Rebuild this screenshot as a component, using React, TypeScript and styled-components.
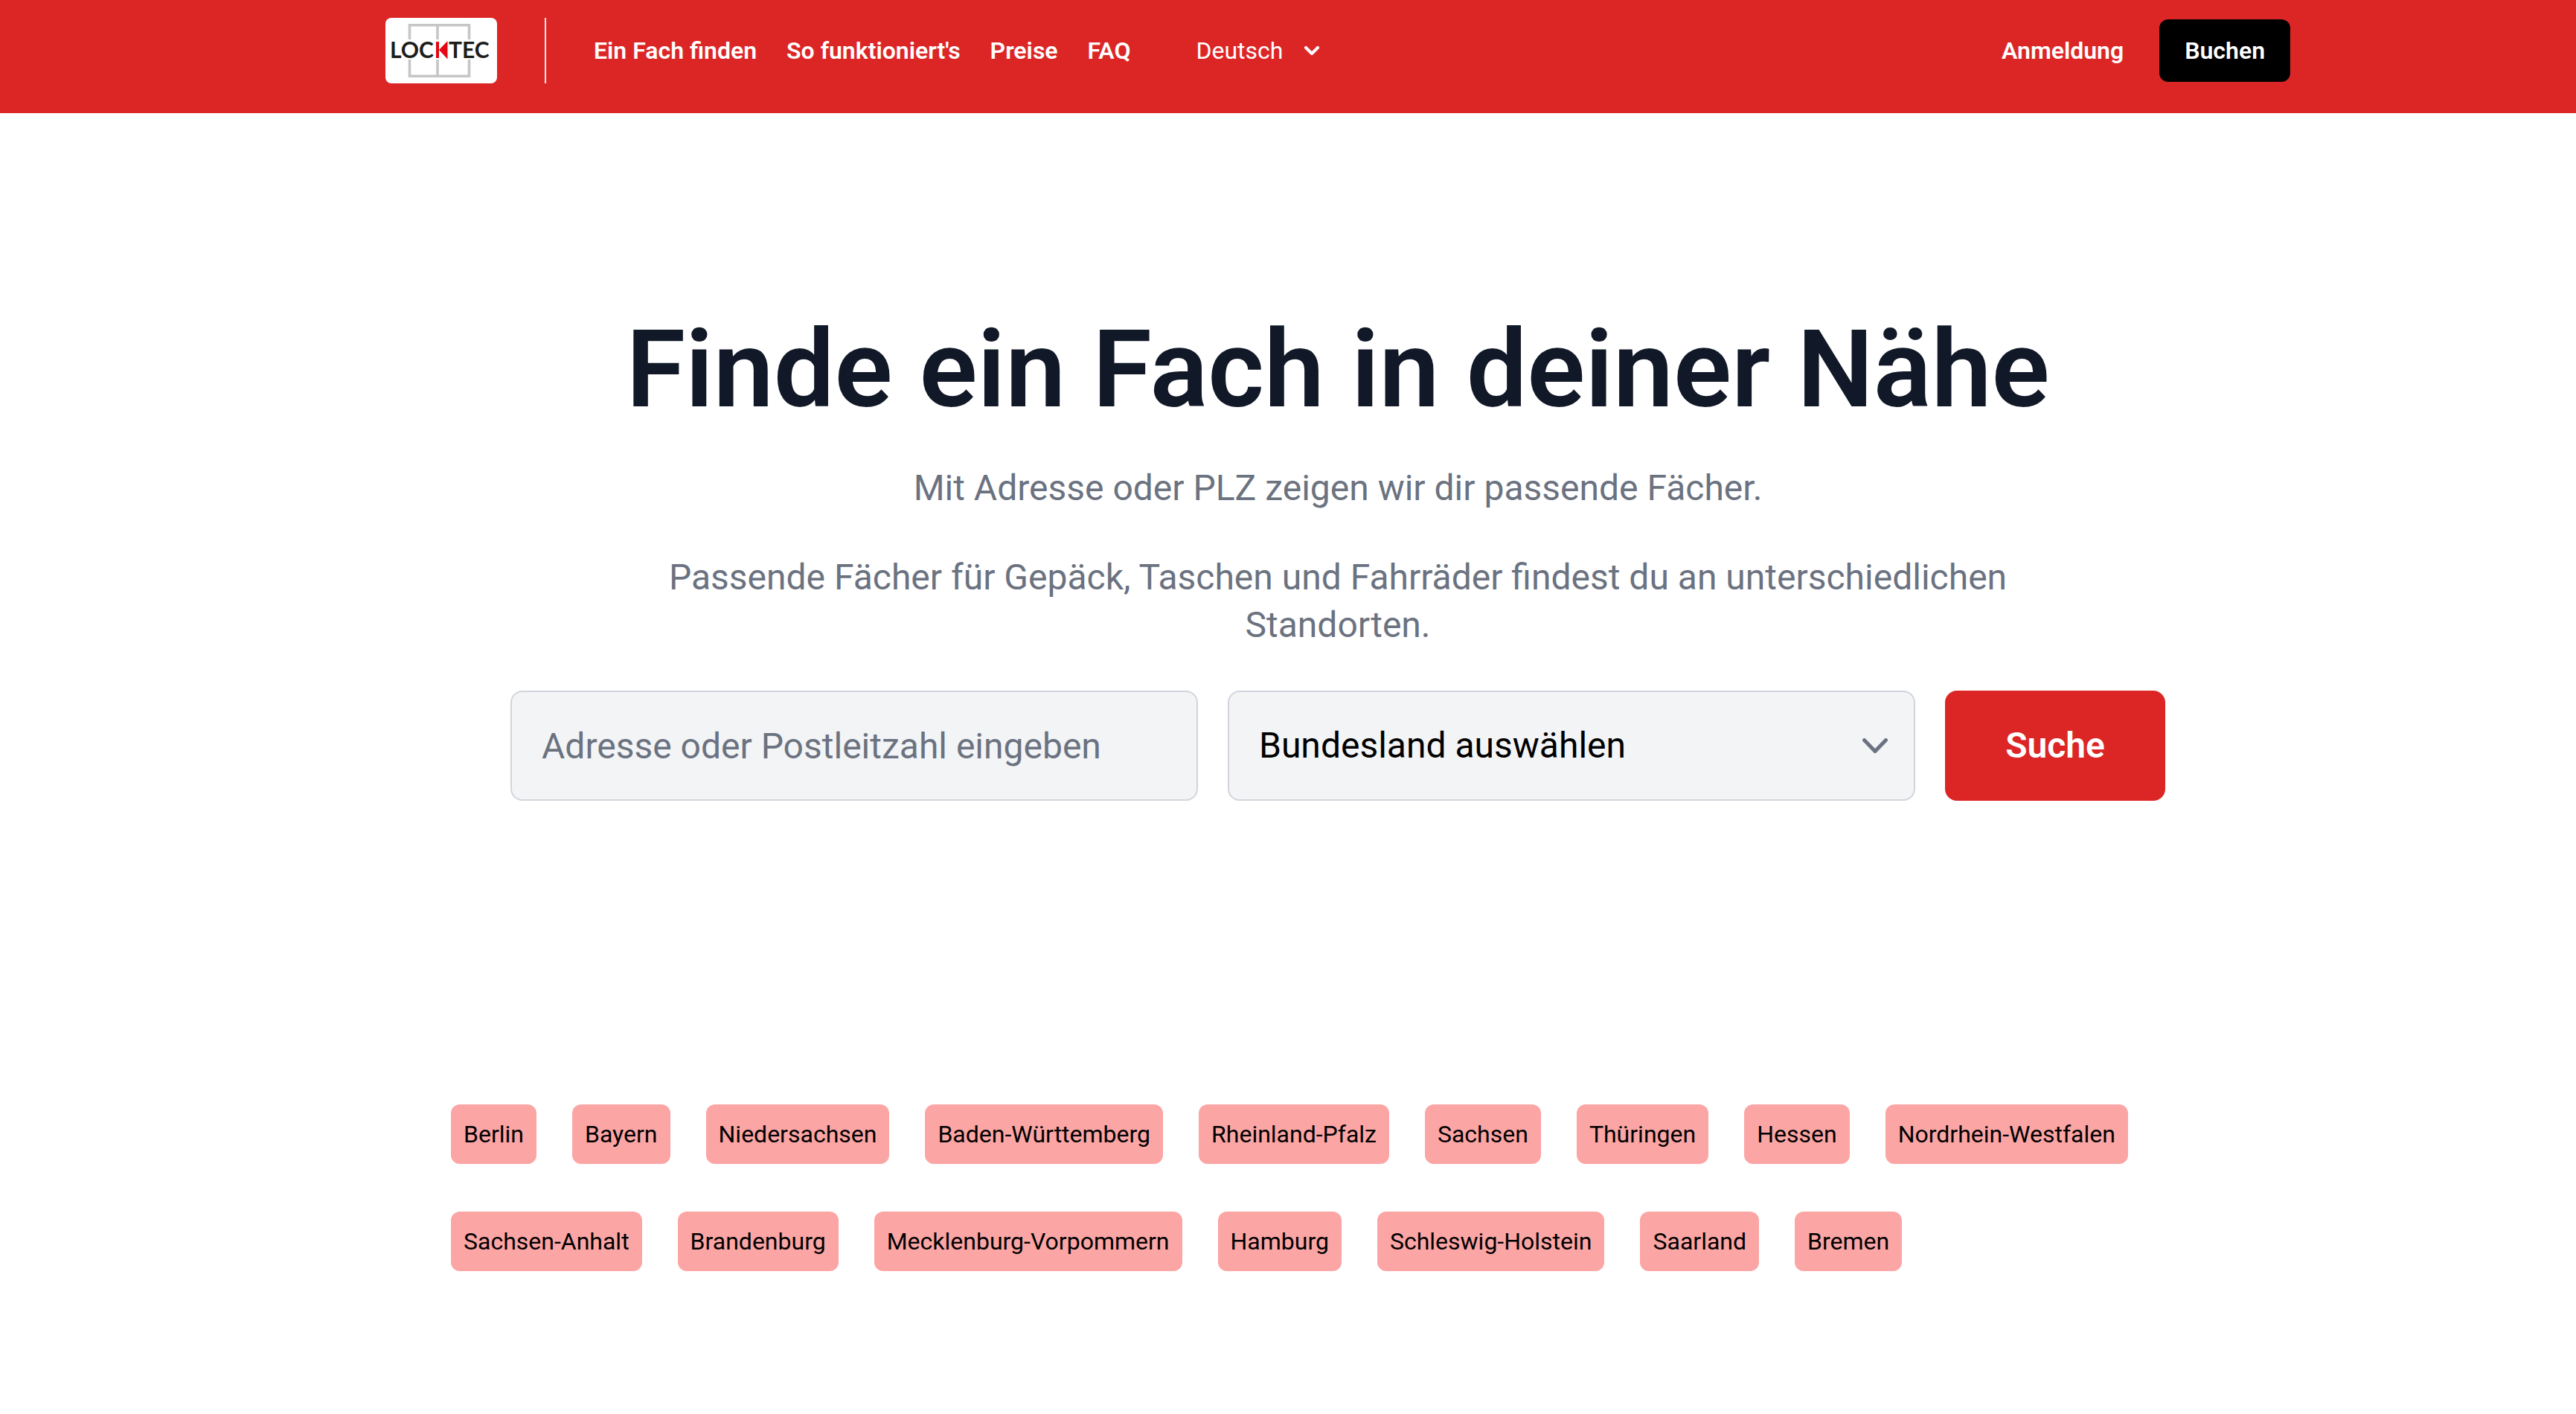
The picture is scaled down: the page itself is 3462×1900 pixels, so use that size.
import React from "react";
import styled, { createGlobalStyle } from "styled-components";

const GlobalStyle = createGlobalStyle`
  *, *::before, *::after { box-sizing: border-box; }
  body {
    margin: 0;
    background: #fff;
    color: #000;
    font-family: Roboto, "Liberation Sans", sans-serif;
    font-size: 32px;
    line-height: 48px;
  }
  a { color: inherit; text-decoration: none; }
  h1, p, ul { margin: 0; padding: 0; }
`;

const Header = styled.header`
  background: #dc2626;
  color: #fff;
  padding: 24px 0 40px 134px;
`;

const HeaderInner = styled.div`
  display: flex;
  align-items: center;
  justify-content: space-between;
  max-width: 2560px;
  margin: 0 auto;
`;

const HeaderGroup = styled.div<{ $gap: number }>`
  display: flex;
  align-items: center;
  gap: ${(p) => p.$gap}px;
`;

const LogoLink = styled.a`
  display: block;
  width: 150px;
  height: 88px;
  border-radius: 8px;
  background: #fff;
  overflow: hidden;
`;

const Nav = styled.nav`
  display: flex;
  align-items: center;
  gap: 40px;
  padding-left: 64px;
  margin-left: 64px;
  height: 88px;
  border-left: 2px solid #e5e7eb;
  font-weight: 600;
`;

const Language = styled.label`
  position: relative;
  display: flex;
  align-items: center;
  margin-left: 88px;
  svg { position: absolute; right: 0; pointer-events: none; }
`;

const LanguageSelect = styled.select`
  appearance: none;
  border: 0;
  padding: 0 48px 0 0;
  background: transparent;
  color: #fff;
  font: inherit;
  option { color: #000; }
`;

const LoginLink = styled.a`
  font-weight: 600;
`;

const BookButton = styled.button`
  border: 0;
  border-radius: 12px;
  padding: 18px 34px;
  background: #000;
  color: #fff;
  font: inherit;
  font-weight: 600;
`;

const Main = styled.main`
  padding: 272px 0 192px 134px;
`;

const Hero = styled.section`
  max-width: 2224px;
  margin: 0 auto;
  text-align: center;
`;

const Title = styled.h1`
  color: #111827;
  font-size: 145px;
  font-weight: 600;
  line-height: 144px;
`;

const Lead = styled.p`
  max-width: 1824px;
  margin: 56px auto 0;
  color: #6b7280;
  font-size: 48px;
  line-height: 64px;
`;

const SearchForm = styled.form`
  display: grid;
  grid-template-columns: 1fr 1fr 296px;
  gap: 40px;
  margin-top: 56px;
`;

const fieldStyle = `
  width: 100%;
  height: 148px;
  border: 2px solid #d1d5db;
  border-radius: 16px;
  padding: 0 40px;
  background: #f3f4f6;
  font: inherit;
  font-size: 48px;
`;

const AddressInput = styled.input`
  ${fieldStyle}
  &::placeholder { color: #6b7280; opacity: 1; }
`;

const StateField = styled.div`
  position: relative;
  display: flex;
  align-items: center;
  svg { position: absolute; right: 37px; pointer-events: none; }
`;

const StateSelect = styled.select`
  ${fieldStyle}
  appearance: none;
  color: #000;
`;

const SearchButton = styled.button`
  border: 0;
  border-radius: 16px;
  background: #dc2626;
  color: #fff;
  font: inherit;
  font-size: 48px;
  font-weight: 600;
`;

const StateList = styled.ul`
  display: flex;
  flex-wrap: wrap;
  gap: 64px 48px;
  max-width: 2384px;
  margin: 408px auto 0;
  list-style: none;
`;

const StateLink = styled.a`
  display: block;
  padding: 16px 17px;
  border-radius: 12px;
  background: #fca5a5;
`;

const navItems = ["Ein Fach finden", "So funktioniert's", "Preise", "FAQ"];

const states = [
  "Berlin", "Bayern", "Niedersachsen", "Baden-Württemberg", "Rheinland-Pfalz", "Sachsen",
  "Thüringen", "Hessen", "Nordrhein-Westfalen", "Sachsen-Anhalt", "Brandenburg",
  "Mecklenburg-Vorpommern", "Hamburg", "Schleswig-Holstein", "Saarland", "Bremen",
];

function Logo() {
  return (
    <svg width="150" height="88" viewBox="0 0 150 88" role="img" aria-label="Locktec">
      <path
        d="M32.5 29V9.8H112.5V29M70 8V29M32.5 56V78.2H112.5V56M70 56V80"
        fill="none"
        stroke="#c6c6c6"
        strokeWidth="3.6"
      />
      <g fontFamily="Lato, sans-serif" fontSize="30" fontWeight="700" fill="#1d1d1b">
        <text x="6" y="54">LOC</text>
        <text x="85" y="54">TEC</text>
      </g>
      <path d="M68 32H72V54H68ZM83.5 31V55.5L72 43Z" fill="#e30613" />
    </svg>
  );
}

function Chevron({ width, height, color, stroke }: { width: number; height: number; color: string; stroke: number }) {
  const inset = stroke / 2;
  return (
    <svg width={width} height={height} viewBox={`0 0 ${width} ${height}`} fill="none" aria-hidden="true">
      <path
        d={`M${inset} ${inset}L${width / 2} ${height - inset - 1}L${width - inset} ${inset}`}
        stroke={color}
        strokeWidth={stroke}
        strokeLinecap="round"
        strokeLinejoin="round"
      />
    </svg>
  );
}

export default function App() {
  return (
    <>
      <GlobalStyle />
      <Header>
        <HeaderInner>
          <HeaderGroup $gap={0}>
            <LogoLink href="#start"><Logo /></LogoLink>
            <Nav>
              {navItems.map((item) => <a key={item} href="#nav">{item}</a>)}
            </Nav>
            <Language>
              <LanguageSelect aria-label="Sprache" defaultValue="de">
                <option value="de">Deutsch</option>
              </LanguageSelect>
              <Chevron width={20} height={13} color="#fff" stroke={4} />
            </Language>
          </HeaderGroup>
          <HeaderGroup $gap={48}>
            <LoginLink href="#login">Anmeldung</LoginLink>
            <BookButton type="button">Buchen</BookButton>
          </HeaderGroup>
        </HeaderInner>
      </Header>
      <Main>
        <Hero>
          <Title>Finde ein Fach in deiner Nähe</Title>
          <Lead>Mit Adresse oder PLZ zeigen wir dir passende Fächer.</Lead>
          <Lead>
            Passende Fächer für Gepäck, Taschen und Fahrräder findest du an unterschiedlichen Standorten.
          </Lead>
          <SearchForm onSubmit={(e) => e.preventDefault()}>
            <AddressInput aria-label="Adresse oder Postleitzahl" placeholder="Adresse oder Postleitzahl eingeben" />
            <StateField>
              <StateSelect aria-label="Bundesland" defaultValue="">
                <option value="">Bundesland auswählen</option>
                {states.map((s) => <option key={s}>{s}</option>)}
              </StateSelect>
              <Chevron width={34} height={21} color="#6b7280" stroke={5} />
            </StateField>
            <SearchButton type="submit">Suche</SearchButton>
          </SearchForm>
        </Hero>
        <StateList>
          {states.map((s) => <li key={s}><StateLink href="#bundesland">{s}</StateLink></li>)}
        </StateList>
      </Main>
    </>
  );
}
